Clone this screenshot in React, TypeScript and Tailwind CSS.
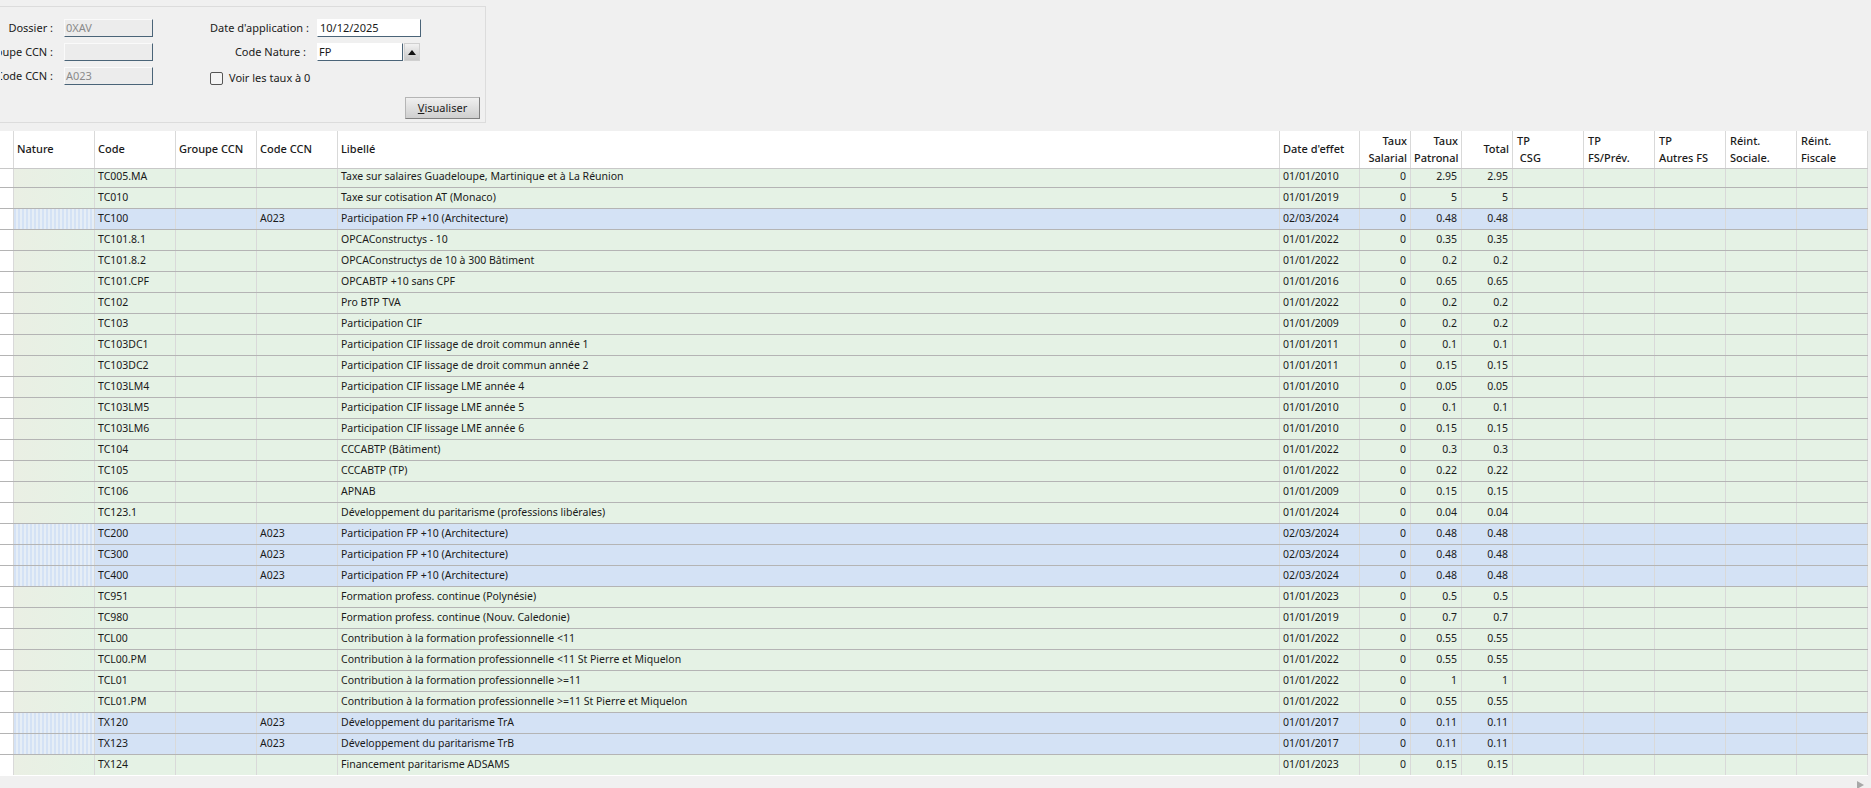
const GRID_ROWS = [
  ["TC005.MA", "", "Taxe sur salaires Guadeloupe, Martinique et à La Réunion", "01/01/2010", "2.95"],
  ["TC010", "", "Taxe sur cotisation AT (Monaco)", "01/01/2019", "5"],
  ["TC100", "A023", "Participation FP +10 (Architecture)", "02/03/2024", "0.48"],
  ["TC101.8.1", "", "OPCAConstructys - 10", "01/01/2022", "0.35"],
  ["TC101.8.2", "", "OPCAConstructys de 10 à 300 Bâtiment", "01/01/2022", "0.2"],
  ["TC101.CPF", "", "OPCABTP +10 sans CPF", "01/01/2016", "0.65"],
  ["TC102", "", "Pro BTP TVA", "01/01/2022", "0.2"],
  ["TC103", "", "Participation CIF", "01/01/2009", "0.2"],
  ["TC103DC1", "", "Participation CIF lissage de droit commun année 1", "01/01/2011", "0.1"],
  ["TC103DC2", "", "Participation CIF lissage de droit commun année 2", "01/01/2011", "0.15"],
  ["TC103LM4", "", "Participation CIF lissage LME année 4", "01/01/2010", "0.05"],
  ["TC103LM5", "", "Participation CIF lissage LME année 5", "01/01/2010", "0.1"],
  ["TC103LM6", "", "Participation CIF lissage LME année 6", "01/01/2010", "0.15"],
  ["TC104", "", "CCCABTP (Bâtiment)", "01/01/2022", "0.3"],
  ["TC105", "", "CCCABTP (TP)", "01/01/2022", "0.22"],
  ["TC106", "", "APNAB", "01/01/2009", "0.15"],
  ["TC123.1", "", "Développement du paritarisme (professions libérales)", "01/01/2024", "0.04"],
  ["TC200", "A023", "Participation FP +10 (Architecture)", "02/03/2024", "0.48"],
  ["TC300", "A023", "Participation FP +10 (Architecture)", "02/03/2024", "0.48"],
  ["TC400", "A023", "Participation FP +10 (Architecture)", "02/03/2024", "0.48"],
  ["TC951", "", "Formation profess. continue (Polynésie)", "01/01/2023", "0.5"],
  ["TC980", "", "Formation profess. continue (Nouv. Caledonie)", "01/01/2019", "0.7"],
  ["TCL00", "", "Contribution à la formation professionnelle <11", "01/01/2022", "0.55"],
  ["TCL00.PM", "", "Contribution à la formation professionnelle <11 St Pierre et Miquelon", "01/01/2022", "0.55"],
  ["TCL01", "", "Contribution à la formation professionnelle >=11", "01/01/2022", "1"],
  ["TCL01.PM", "", "Contribution à la formation professionnelle >=11 St Pierre et Miquelon", "01/01/2022", "0.55"],
  ["TX120", "A023", "Développement du paritarisme TrA", "01/01/2017", "0.11"],
  ["TX123", "A023", "Développement du paritarisme TrB", "01/01/2017", "0.11"],
  ["TX124", "", "Financement paritarisme ADSAMS", "01/01/2023", "0.15"],
];

const cell = "shrink-0 h-full border-r border-[#d9d9d9] px-[3px] flex items-center whitespace-nowrap overflow-hidden";

const HeaderCell = ({ className, children }: { className: string; children?: React.ReactNode }) => (
  <div className={`shrink-0 h-full border-r border-[#d9d9d9] px-[3px] leading-[17px] ${className}`}>{children}</div>
);

const Field = ({ label, value }: { label: string; value: string }) => (
  <div className="flex items-center h-[18px]">
    <div className="w-[52px] shrink-0 flex justify-end whitespace-nowrap overflow-hidden">{label}</div>
    <div className="ml-[11px] w-[89px] h-[18px] bg-[#ececec] border border-[#fafafa] border-r-[#4a6478] border-b-[#4a6478] pl-[1px] leading-[16px] text-[#8a8a8a]">
      {value}
    </div>
  </div>
);

const App = () => {
  return (
    <div className="w-[1871px] h-[788px] overflow-hidden bg-[#f0f0f0] text-[#1a1a1a] font-['Noto_Sans','Liberation_Sans',sans-serif]">
      <div className="h-[131px] pt-[6px] text-[11px]">
        <div className="ml-[-1px] w-[487px] h-[117px] border border-[#dcdcdc] flex">
          <div className="pl-[1px] pt-[12px] flex flex-col gap-[6px] w-[210px]">
            <Field label="Dossier :" value="0XAV" />
            <Field label="Groupe CCN :" value="" />
            <Field label="Code CCN :" value="A023" />
          </div>
          <div className="flex-1 pt-[12px] pr-[5px] flex flex-col">
            <div className="flex items-center h-[18px]">
              <div className="w-[96px] text-right whitespace-nowrap">Date d'application :</div>
              <div className="ml-[11px] w-[104px] h-[18px] bg-white border border-white border-r-[#4a6478] border-b-[#4a6478] pl-[2px] leading-[16px]">10/12/2025</div>
            </div>
            <div className="flex items-center h-[18px] mt-[6px]">
              <div className="w-[96px] text-right whitespace-nowrap">Code Nature :</div>
              <div className="ml-[11px] w-[86px] h-[18px] bg-white border border-white border-r-[#4a6478] border-b-[#4a6478] pl-[1px] leading-[16px]">FP</div>
              <button className="ml-[1px] w-[16px] h-[18px] bg-gradient-to-b from-[#f2f2f2] to-[#c8c8c8] border border-[#d0d0d0] flex items-center justify-center">
                <svg width="8" height="5" viewBox="0 0 8 5"><path d="M4 0 8 5H0z" fill="#111" /></svg>
              </button>
            </div>
            <label className="flex items-center mt-[10px] h-[14px]">
              <span className="w-[13px] h-[13px] rounded-[2px] border border-[#555] bg-[#f4f4f4]" />
              <span className="ml-[6px]">Voir les taux à 0</span>
            </label>
            <div className="mt-auto mb-[3px] flex justify-end">
              <button className="w-[75px] h-[22px] bg-gradient-to-b from-[#f0f0f0] to-[#cfcfcf] border border-[#b5b5b5] border-r-[#808080] border-b-[#808080]">
                <span className="underline">V</span>isualiser
              </button>
            </div>
          </div>
        </div>
      </div>

      <div className="w-[1868px] text-[10.5px]">
        <div className="relative z-10 flex h-[38px] bg-white border-b border-[#c8c8c8] font-medium text-[11px]">
          <HeaderCell className="w-[14px]" />
          <HeaderCell className="w-[81px] pt-[9px]">Nature</HeaderCell>
          <HeaderCell className="w-[81px] pt-[9px]">Code</HeaderCell>
          <HeaderCell className="w-[81px] pt-[9px]">Groupe CCN</HeaderCell>
          <HeaderCell className="w-[81px] pt-[9px]">Code CCN</HeaderCell>
          <HeaderCell className="w-[942px] pt-[9px]">Libellé</HeaderCell>
          <HeaderCell className="w-[80px] pt-[9px]">Date d'effet</HeaderCell>
          <HeaderCell className="w-[51px] pt-[1px] text-right">Taux<br />Salarial</HeaderCell>
          <HeaderCell className="w-[51px] pt-[1px] text-right">Taux<br />Patronal</HeaderCell>
          <HeaderCell className="w-[51px] pt-[9px] text-right">Total</HeaderCell>
          <HeaderCell className="w-[71px] pt-[1px] pl-[4px]">TP<br />&nbsp;CSG</HeaderCell>
          <HeaderCell className="w-[71px] pt-[1px] pl-[4px]">TP<br />FS/Prév.</HeaderCell>
          <HeaderCell className="w-[71px] pt-[1px] pl-[4px]">TP<br />Autres FS</HeaderCell>
          <HeaderCell className="w-[71px] pt-[1px] pl-[4px]">Réint.<br />Sociale.</HeaderCell>
          <HeaderCell className="w-[71px] pt-[1px] pl-[4px]">Réint.<br />Fiscale</HeaderCell>
        </div>

        <div className="-mt-[2px]">
          {GRID_ROWS.map(([code, ccn, label, date, rate]) => {
            const isBlue = ccn !== "";
            return (
              <div
                key={code}
                className={`flex h-[21px] border-b border-[#b4b4b4] last:border-b-white ${isBlue ? "bg-[#d4e2f5]" : "bg-[#e5f2e5]"}`}
              >
                <div className={`${cell} w-[14px] bg-white`} />
                <div
                  className={`${cell} w-[81px] ${
                    isBlue
                      ? "bg-[repeating-linear-gradient(90deg,#d4e2f5_0px,#d4e2f5_2px,#e6eef6_2px,#e6eef6_4px)]"
                      : "bg-gradient-to-r from-[#eaefe4] to-[#e5f2e5]"
                  }`}
                />
                <div className={`${cell} w-[81px]`}>{code}</div>
                <div className={`${cell} w-[81px]`} />
                <div className={`${cell} w-[81px]`}>{ccn}</div>
                <div className={`${cell} w-[942px]`}>{label}</div>
                <div className={`${cell} w-[80px]`}>{date}</div>
                <div className={`${cell} w-[51px] justify-end pr-[4px]`}>0</div>
                <div className={`${cell} w-[51px] justify-end pr-[4px]`}>{rate}</div>
                <div className={`${cell} w-[51px] justify-end pr-[4px]`}>{rate}</div>
                <div className={`${cell} w-[71px]`} />
                <div className={`${cell} w-[71px]`} />
                <div className={`${cell} w-[71px]`} />
                <div className={`${cell} w-[71px]`} />
                <div className={`${cell} w-[71px]`} />
              </div>
            );
          })}
        </div>
      </div>

      <div className="flex justify-end pr-[7px] pt-[5px]">
        <svg width="7" height="8" viewBox="0 0 7 8"><path d="M0 0 7 4 0 8z" fill="#a8a8a8" /></svg>
      </div>
    </div>
  );
};

export default App;
